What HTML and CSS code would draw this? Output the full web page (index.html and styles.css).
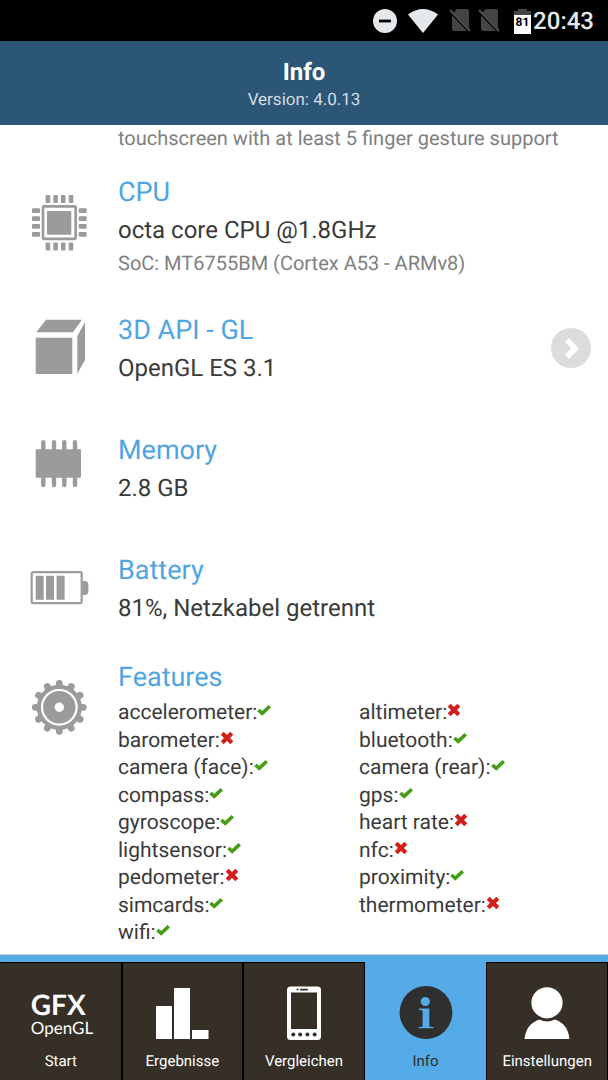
FILE: index.html
```html
<!DOCTYPE html>
<html lang="de">

<head>
    <meta charset="UTF-8">
    <meta name="viewport" content="width=device-width, initial-scale=1.0">
    <title>Info</title>
    <link rel="stylesheet" href="styles.css">
</head>

<body>
    <!-- shared icons -->
    <svg class="defs" aria-hidden="true">
        <symbol id="yes" viewBox="0 0 14 14">
            <path d="M1.4 7 L5.2 10.4 L12.8 3.2" fill="none" stroke="#449d15" stroke-width="3.6" />
        </symbol>
        <symbol id="no" viewBox="0 0 14 14">
            <path d="M2.2 2.2 L11.8 11.8 M11.8 2.2 L2.2 11.8" fill="none" stroke="#d0201c" stroke-width="4.2" />
        </symbol>
        <symbol id="nosim" viewBox="0 0 22 26">
            <path d="M8 1 H18 Q20 1 20 3 V22 Q20 23 19 23 H5 Q3 23 3 21 V6 Z" fill="#444" />
            <path d="M-1 1 L22 25" stroke="#000" stroke-width="3" />
            <path d="M1 2 L21 23" stroke="#505050" stroke-width="2" />
        </symbol>
    </svg>

    <div class="status-bar">
        <svg width="24" height="26" viewBox="0 0 24 26">
            <circle cx="12" cy="13" r="12" fill="#e4e8ea" />
            <rect x="6" y="11.6" width="12" height="2.8" fill="#000" />
        </svg>
        <svg class="wifi" width="30" height="26" viewBox="0 0 30 26">
            <path d="M0 6.5 Q15 -4.5 30 6.5 L15 25 Z" fill="#e4e8ea" />
        </svg>
        <svg class="sim" width="22" height="26"><use href="#nosim" /></svg>
        <svg class="sim" width="22" height="26"><use href="#nosim" /></svg>
        <svg class="level" width="17" height="26" viewBox="0 0 17 26">
            <path d="M4 1 H13 V3 H17 V7 H0 V3 H4 Z" fill="#444" />
            <rect y="7" width="17" height="19" fill="#fff" />
            <text x="8.5" y="18" class="level-text">81</text>
        </svg>
        <span class="time">20:43</span>
    </div>

    <header class="header">
        <h1>Info</h1>
        <p>Version: 4.0.13</p>
    </header>

    <main class="content">
        <p class="previous">touchscreen with at least 5 finger gesture support</p>

        <section class="item item-tall">
            <svg class="icon" viewBox="0 0 60 80">
                <rect x="13" y="32.4" width="32.7" height="32.4" rx="1" fill="none" stroke="#9b9b9b" stroke-width="2.7" />
                <rect x="17" y="37" width="24.3" height="23.7" rx="1" />
                <g>
                    <rect x="15.6" y="21" width="4.6" height="8" rx="1" />
                    <rect x="23.3" y="21" width="4.6" height="8" rx="1" />
                    <rect x="30.9" y="21" width="4.6" height="8" rx="1" />
                    <rect x="38.7" y="21" width="4.6" height="8" rx="1" />
                    <rect x="15.6" y="68.5" width="4.6" height="8" rx="1" />
                    <rect x="23.3" y="68.5" width="4.6" height="8" rx="1" />
                    <rect x="30.9" y="68.5" width="4.6" height="8" rx="1" />
                    <rect x="38.7" y="68.5" width="4.6" height="8" rx="1" />
                </g>
                <g>
                    <rect x="2" y="34.3" width="8" height="4.7" rx="1" />
                    <rect x="2" y="42.3" width="8" height="4.7" rx="1" />
                    <rect x="2" y="50" width="8" height="4.7" rx="1" />
                    <rect x="2" y="58" width="8" height="4.7" rx="1" />
                    <rect x="48.7" y="34.3" width="8" height="4.7" rx="1" />
                    <rect x="48.7" y="42.3" width="8" height="4.7" rx="1" />
                    <rect x="48.7" y="50" width="8" height="4.7" rx="1" />
                    <rect x="48.7" y="58" width="8" height="4.7" rx="1" />
                </g>
            </svg>
            <div class="text">
                <h2>CPU</h2>
                <p>octa core CPU @1.8GHz</p>
                <p class="small">SoC: MT6755BM (Cortex A53 - ARMv8)</p>
            </div>
        </section>

        <section class="item">
            <svg class="icon" viewBox="0 0 60 80">
                <rect x="5.7" y="25.7" width="36.6" height="36.3" />
                <path d="M16 7.7 H52 L43 20.3 H6.3 Z M47.3 24.3 L55 10.3 V48 L47.3 61.7 Z" />
            </svg>
            <div class="text">
                <h2>3D API - GL</h2>
                <p>OpenGL ES 3.1</p>
            </div>
            <button class="more" type="button" aria-label="3D API - GL">
                <svg width="40" height="40" viewBox="0 0 40 40">
                    <path d="M16 12 L24 20.5 L16 29" fill="none" stroke="#fff" stroke-width="5.6" />
                </svg>
            </button>
        </section>

        <section class="item">
            <svg class="icon" viewBox="0 0 60 80">
                <rect x="5.7" y="17.3" width="45.3" height="28.4" rx="1" />
                <path d="M13.3 10.2 V53 M24 10.2 V53 M34.3 10.2 V53 M45 10.2 V53" stroke="#9b9b9b" stroke-width="4.4" stroke-linecap="round" />
            </svg>
            <div class="text">
                <h2>Memory</h2>
                <p>2.8 GB</p>
            </div>
        </section>

        <section class="item item-short">
            <svg class="icon" viewBox="0 0 60 80">
                <rect x="1.7" y="20.1" width="50" height="31" rx="1.5" fill="none" stroke="#9b9b9b" stroke-width="2.2" />
                <path d="M5.7 23.7 H13.7 V47.7 H5.7 Z M16 23.7 H24 V47.7 H16 Z M26.6 23.7 H34.6 V47.7 H26.6 Z" />
                <path d="M52.7 29 H56 Q58.4 30 58.4 32 V40 Q58.4 42 56 43 H52.7 Z" />
            </svg>
            <div class="text">
                <h2>Battery</h2>
                <p>81%, Netzkabel getrennt</p>
            </div>
        </section>

        <section class="item item-features">
            <svg class="icon" viewBox="0 0 60 80">
                <circle cx="29.3" cy="48.3" r="22.6" />
                <g stroke="#9b9b9b" stroke-width="6.8" stroke-linecap="round">
                    <path d="M29.3 24.3 V72.3 M5.3 48.3 H53.3" />
                    <path d="M29.3 24.3 V72.3 M5.3 48.3 H53.3" transform="rotate(30 29.3 48.3)" />
                    <path d="M29.3 24.3 V72.3 M5.3 48.3 H53.3" transform="rotate(60 29.3 48.3)" />
                </g>
                <circle cx="29.3" cy="48.3" r="17.3" fill="none" stroke="#fff" stroke-width="2.2" />
                <circle cx="29.3" cy="48.3" r="4.7" fill="#fff" />
            </svg>
            <div class="text">
                <h2>Features</h2>
                <ul class="features">
                    <li>accelerometer:<svg role="img" aria-label="ja"><use href="#yes" /></svg></li>
                    <li>altimeter:<svg role="img" aria-label="nein"><use href="#no" /></svg></li>
                    <li>barometer:<svg role="img" aria-label="nein"><use href="#no" /></svg></li>
                    <li>bluetooth:<svg role="img" aria-label="ja"><use href="#yes" /></svg></li>
                    <li>camera (face):<svg role="img" aria-label="ja"><use href="#yes" /></svg></li>
                    <li>camera (rear):<svg role="img" aria-label="ja"><use href="#yes" /></svg></li>
                    <li>compass:<svg role="img" aria-label="ja"><use href="#yes" /></svg></li>
                    <li>gps:<svg role="img" aria-label="ja"><use href="#yes" /></svg></li>
                    <li>gyroscope:<svg role="img" aria-label="ja"><use href="#yes" /></svg></li>
                    <li>heart rate:<svg role="img" aria-label="nein"><use href="#no" /></svg></li>
                    <li>lightsensor:<svg role="img" aria-label="ja"><use href="#yes" /></svg></li>
                    <li>nfc:<svg role="img" aria-label="nein"><use href="#no" /></svg></li>
                    <li>pedometer:<svg role="img" aria-label="nein"><use href="#no" /></svg></li>
                    <li>proximity:<svg role="img" aria-label="ja"><use href="#yes" /></svg></li>
                    <li>simcards:<svg role="img" aria-label="ja"><use href="#yes" /></svg></li>
                    <li>thermometer:<svg role="img" aria-label="nein"><use href="#no" /></svg></li>
                    <li>wifi:<svg role="img" aria-label="ja"><use href="#yes" /></svg></li>
                </ul>
            </div>
        </section>
    </main>

    <nav class="tabs">
        <a href="#start" class="tab">
            <span class="tab-icon logo"><b>GFX</b><span>OpenGL</span></span>
            Start
        </a>
        <a href="#ergebnisse" class="tab">
            <svg class="tab-icon" viewBox="0 0 60 60">
                <path d="M4 21 H20 V54 H4 Z M22 3 H38 V54 H22 Z M40 45 H56.5 V54 H40 Z" fill="#fff" />
            </svg>
            Ergebnisse
        </a>
        <a href="#vergleichen" class="tab">
            <svg class="tab-icon" viewBox="0 0 60 60">
                <rect x="13" y="1.5" width="34" height="53.5" rx="3.5" fill="#fff" />
                <g fill="#352f28">
                    <rect x="17" y="7.5" width="26" height="36.5" />
                    <circle cx="23.5" cy="4.6" r="1" />
                    <rect x="26" y="3.7" width="8" height="1.8" rx="0.9" />
                    <circle cx="19.3" cy="49.6" r="2" />
                    <circle cx="26.2" cy="49.6" r="2" />
                    <circle cx="33.4" cy="49.6" r="2" />
                    <circle cx="40.6" cy="49.6" r="2" />
                </g>
            </svg>
            Vergleichen
        </a>
        <a href="#info" class="tab active">
            <svg class="tab-icon" viewBox="0 0 60 60">
                <circle cx="30" cy="27.5" r="26.4" fill="#2f2f2f" />
                <circle cx="29.3" cy="16.5" r="4.6" fill="#55aae8" />
                <path d="M23 23.6 H33.3 V41 Q33.3 42 37.5 42 V43.3 H22.5 V42 Q26.6 42 26.6 41 V26 Q26.6 25 23 25 Z" fill="#55aae8" />
            </svg>
            Info
        </a>
        <a href="#einstellungen" class="tab">
            <svg class="tab-icon" viewBox="0 0 60 60">
                <circle cx="30" cy="17.8" r="15.6" fill="#fff" />
                <path d="M22.5 34.5 Q30 38.5 38 34.5 Q51 39 52.5 54 H7.5 Q9 39 22.5 34.5 Z" fill="#fff" />
            </svg>
            Einstellungen
        </a>
    </nav>
</body>

</html>
```

FILE: styles.css
```css
* {
    box-sizing: border-box;
}

body {
    font-family: Roboto, "Liberation Sans", sans-serif;
    text-rendering: geometricPrecision;
    margin: 0;
    display: flex;
    flex-direction: column;
    height: 100vh;
    background-color: #fff;
    color: #3a3a3a;
}

h1,
h2,
p,
ul {
    margin: 0;
    padding: 0;
    font-weight: 400;
}

.defs {
    display: none;
}

.status-bar {
    display: flex;
    align-items: center;
    justify-content: flex-end;
    flex-shrink: 0;
    height: 41px;
    padding-right: 14px;
    background-color: #000;
    color: #e4e8ea;
}

.wifi {
    margin: 0 11px;
}

.sim {
    margin-right: 7px;
}

.level {
    margin: 0 2px 0 7px;
}

.level-text {
    font-size: 12px;
    font-weight: 700;
    text-anchor: middle;
}

.time {
    font-size: 24px;
    font-weight: 500;
}

.header {
    flex-shrink: 0;
    padding: 15px 0 13px;
    background-color: #2b5675;
    color: #fff;
    text-align: center;
}

.header h1 {
    font-size: 24px;
    line-height: 32px;
    font-weight: 700;
}

.header p {
    font-size: 17px;
    line-height: 24px;
    color: #d5dde3;
}

.content {
    flex: 1;
    min-height: 0;
    display: flex;
    flex-direction: column;
    overflow: hidden;
}

.previous {
    padding-left: 118px;
    margin-bottom: 23px;
    font-size: 20px;
    line-height: 26px;
    color: #808080;
    white-space: nowrap;
}

.item {
    display: flex;
    align-items: flex-start;
    min-height: 120px;
    padding: 0 17px 0 30px;
}

.item-tall {
    min-height: 138px;
}

.item-short {
    min-height: 107px;
}

.item-features {
    flex: 1;
    align-items: stretch;
    padding-right: 8px;
    padding-bottom: 6px;
}

.icon {
    width: 60px;
    height: 80px;
    margin-right: 28px;
    flex-shrink: 0;
    fill: #9b9b9b;
}

.text {
    flex: 1;
    display: flex;
    flex-direction: column;
}

.text h2 {
    font-size: 27px;
    line-height: 36px;
    color: #4ea5e2;
}

.text p {
    font-size: 24px;
    line-height: 40px;
}

.text .small {
    font-size: 20px;
    line-height: 26px;
    color: #808080;
}

.more {
    width: 40px;
    height: 40px;
    margin-top: 16px;
    padding: 0;
    border: none;
    border-radius: 50%;
    background-color: #dbdddc;
    cursor: pointer;
}

.features {
    flex: 1;
    display: grid;
    grid-template-columns: 1fr 1fr;
    grid-auto-rows: 1fr;
    padding-top: 5px;
    list-style: none;
    font-size: 21px;
    line-height: 27px;
}

.features svg {
    width: 14px;
    height: 14px;
    vertical-align: 2px;
}

.tabs {
    display: flex;
    flex-shrink: 0;
    height: 126px;
    padding-top: 7px;
    border-top: 1px solid #c4ccd0;
    background-color: #55aae8;
}

.tab {
    flex: 1;
    display: flex;
    flex-direction: column;
    align-items: center;
    padding-top: 22px;
    border: 1px solid #000;
    border-bottom: none;
    background-color: #352f28;
    color: #fff;
    font-size: 15px;
    line-height: 24px;
    text-decoration: none;
}

.tab:first-child {
    border-left-color: #352f28;
}

.tab.active {
    border-color: #55aae8;
    background-color: #55aae8;
    color: #2f2f2f;
}

.tab-icon {
    width: 70px;
    height: 60px;
    margin-bottom: 4px;
}

.logo {
    padding-left: 5px;
    font-family: Lato, sans-serif;
}

.logo b {
    display: block;
    padding-top: 5px;
    font-size: 28px;
    line-height: 28px;
}

.logo span {
    display: block;
    font-size: 17px;
    line-height: 20px;
}
```
